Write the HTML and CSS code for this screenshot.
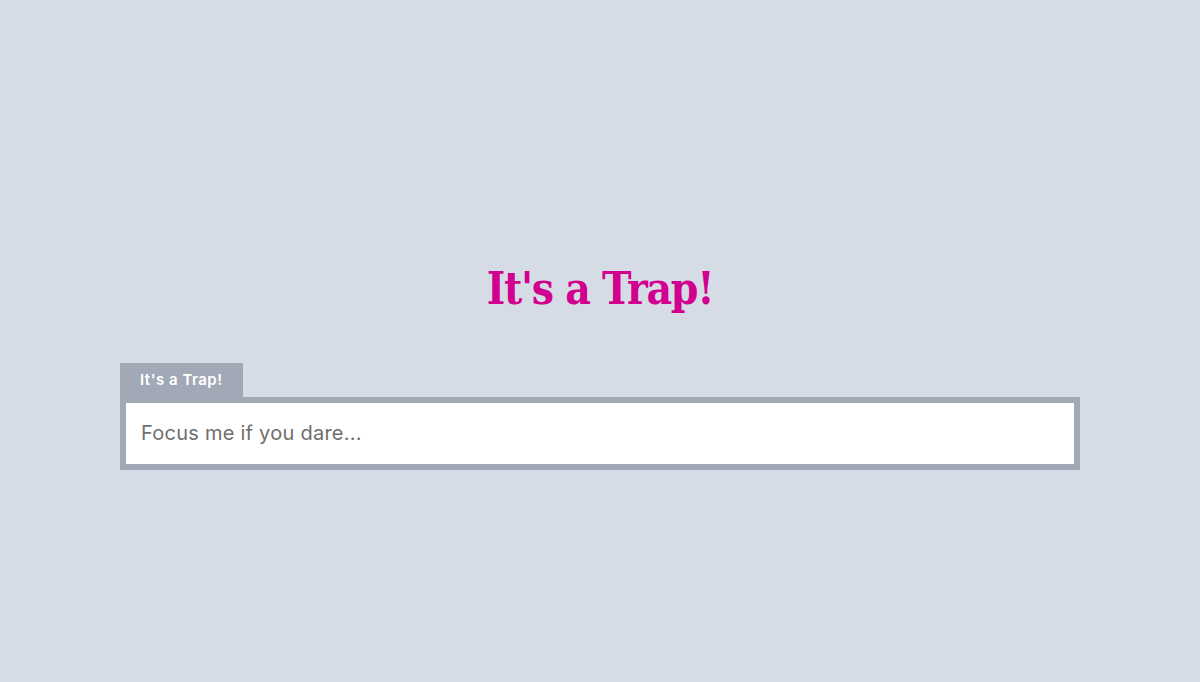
FILE: index.html
```html
<!DOCTYPE html>
<html>
<head>
<meta charset="utf-8">
<link rel="stylesheet" href="styles.css">
</head>
<body>
<main class="page">
  <h1 class="title">It's a Trap!</h1>
  <div class="field">
    <label class="field-label" for="trap">It's a Trap!</label>
    <input class="field-input" id="trap" type="text" placeholder="Focus me if you dare...">
  </div>
</main>
</body>
</html>
```
FILE: styles.css
```css
html, body {
  margin: 0;
  padding: 0;
  background: #d6dce6;
}
.page {
  box-sizing: border-box;
  height: 682px;
  padding-top: 48px;
  display: flex;
  flex-direction: column;
  justify-content: center;
  align-items: center;
}
.title {
  margin: 0 0 46px;
  font-family: "DejaVu Serif", serif;
  font-stretch: condensed;
  font-weight: bold;
  font-size: 44px;
  line-height: 56px;
  color: #d1008e;
  letter-spacing: -1.3px;
}
.field {
  width: 960px;
  display: flex;
  flex-direction: column;
  align-items: flex-start;
}
.field-label {
  background: #a1a8b6;
  color: #ffffff;
  font-family: "Inter", sans-serif;
  font-weight: 600;
  font-size: 15px;
  letter-spacing: 0.5px;
  height: 34px;
  line-height: 34px;
  padding: 0 20px;
  box-sizing: border-box;
}
.field-input {
  box-sizing: border-box;
  width: 960px;
  height: 73px;
  margin: 0;
  border: 6px solid #a1a8b6;
  background: #ffffff;
  padding: 0 15px;
  font-family: "Inter", sans-serif;
  font-size: 20px;
  letter-spacing: 0.25px;
  color: #333;
  outline: none;
}
.field-input::placeholder {
  color: #6e6e6e;
}
```
